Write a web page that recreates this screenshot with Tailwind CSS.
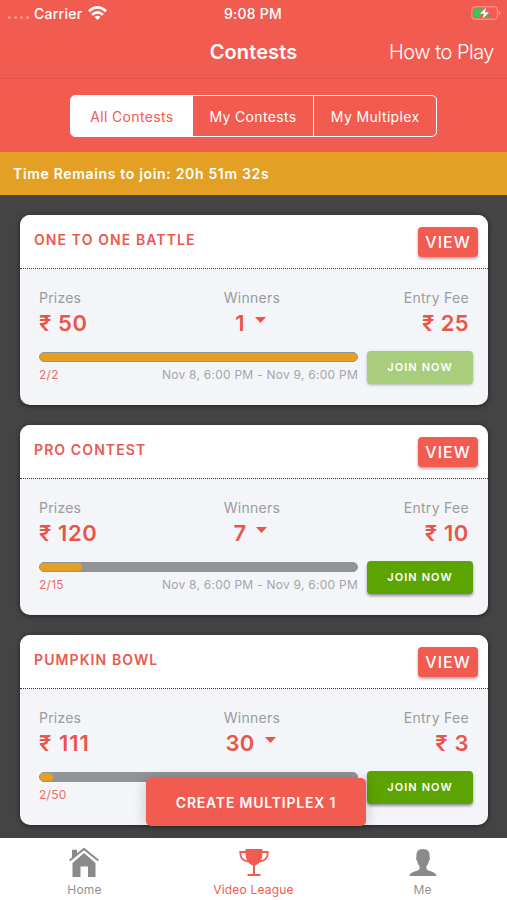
<!DOCTYPE html>
<html lang="en">
<head>
<meta charset="utf-8">
<title>Contests</title>
<script src="https://cdn.jsdelivr.net/npm/@tailwindcss/browser@4"></script>
</head>
<body class="bg-[#444]">
<div class="relative flex h-[900px] w-[507px] flex-col overflow-hidden bg-[#444] font-['Inter','Liberation_Sans',sans-serif] whitespace-nowrap">
  <header class="h-[152px] shrink-0 bg-[#f25b50] text-white">
    <div class="grid h-[26px] grid-cols-3 items-center pr-[6px] pl-2">
      <div class="flex items-center">
        <div class="mt-2 flex w-[26px] gap-[3px]"><i class="size-[3px] rounded-full bg-white/35"></i><i class="size-[3px] rounded-full bg-white/35"></i><i class="size-[3px] rounded-full bg-white/35"></i><i class="size-[3px] rounded-full bg-white/35"></i></div>
        <span class="text-[14px] font-medium tracking-[0.25px]">Carrier</span>
        <svg class="ml-[6px] h-[14px] w-[19px]" viewBox="0 0 19 14" fill="none" stroke="#fff" stroke-width="2.6"><path d="M1 5.2Q9.500-2.400 18 5.200"/><path d="M4 8.700Q9.500 3.900 15 8.700"/><path d="M9.500 14L6.500 11Q9.500 8.300 12.500 11Z" fill="#fff" stroke="none"/></svg>
      </div>
      <div class="-ml-[3px] text-center text-[14px] font-medium tracking-[0.25px]">9:08 PM</div>
      <svg class="h-[14px] w-[30px] justify-self-end" viewBox="0 0 30 14"><rect x=".8" y=".8" width="25.500" height="12.400" rx="3" fill="none" stroke="#fff" stroke-opacity=".45"/><path d="M28 5v4q1.500-.6 1.500-2T28 5" fill="#fff" fill-opacity=".45"/><path d="M4 2.500h8L8.500 11.500H4Q2.500 11.500 2.500 10V4Q2.500 2.500 4 2.500M15 7h2.500v4.500h-4z" fill="#35c759"/><path d="M15.200 1.500L9 7.800h4l-1.500 5L18 6.200h-4z" fill="#fff"/></svg>
    </div>
    <div class="grid h-[53px] grid-cols-3 items-center border-b border-[#e4544a] pr-[13px] pl-[13px]">
      <div></div>
      <h1 class="text-center text-[20px] font-semibold tracking-[0.1px]">Contests</h1>
      <div class="justify-self-end text-[20px] font-light tracking-[-0.5px]">How to Play</div>
    </div>
    <div class="mx-auto mt-4 grid h-[42px] w-[367px] grid-cols-3 overflow-hidden rounded-[5px] border border-white text-center text-[14px] leading-[41px] tracking-[0.35px]">
      <div class="bg-white text-[#f25b50]">All Contests</div>
      <div class="border-r border-white">My Contests</div>
      <div>My Multiplex</div>
    </div>
  </header>
  <div class="flex h-[43px] shrink-0 items-center bg-[#e3a024] pl-[13px] text-[14px] font-semibold tracking-[0.67px] text-white">Time Remains to join: 20h 51m 32s</div>

  <main class="flex flex-col gap-5 pt-5 pr-[19px] pl-5">
    <section class="h-[190px] shrink-0 overflow-hidden rounded-[10px] bg-[#f3f5f9] shadow-[0_1px_5px_#222]">
      <div class="flex h-[54px] items-start justify-between border-b border-dotted border-[#333] bg-white pt-3 pr-[10px] pl-[14px]">
        <h2 class="mt-[3px] text-[14px] leading-5 font-semibold tracking-[1.1px] text-[#e9594f]">ONE TO ONE BATTLE</h2>
        <div class="h-[30px] w-[60px] rounded-[4px] bg-[#f25b50] text-center text-[16px] leading-[30px] font-medium tracking-[1px] text-white shadow-[0_2px_3px_#0005]">VIEW</div>
      </div>
      <div class="grid grid-cols-3 pt-[19px] pr-[19px] pl-[19px] text-[14px] leading-5 text-[#999ca1]">
        <div class="tracking-[0.2px]">Prizes<div class="-mt-px mb-[3px] text-[22px] leading-8 font-semibold tracking-[0.6px] text-[#ea5549]">₹ 50</div></div>
        <div class="-ml-1 justify-self-center text-center tracking-[0.3px]">Winners<div class="-mt-px mb-[3px] -ml-[3px] flex justify-center gap-[10px] text-[22px] leading-8 font-semibold text-[#ea5549]">1<svg class="mt-[10px] h-[6px] w-[11px]" viewBox="0 0 11 6"><path d="M0 0h11L5.500 6z" fill="currentColor"/></svg></div></div>
        <div class="text-right tracking-[0.3px]">Entry Fee<div class="-mt-px mb-[3px] text-[22px] leading-8 font-semibold tracking-[0.4px] text-[#ea5549]">₹ 25</div></div>
      </div>
      <div class="flex justify-between pr-[15px] pl-[19px]">
        <div class="mt-[10px] w-[319px]">
          <div class="h-[10px] rounded-full border border-[#919395] bg-[#919395]"><div class="h-full rounded-full bg-[#e3a024]" style="width:100%"></div></div>
          <div class="mt-1 flex justify-between text-[12px] leading-[18px] tracking-[0.25px] text-[#a3a6aa]"><span class="text-[#f06c63]">2/2</span><span>Nov 8, 6:00 PM - Nov 9, 6:00 PM</span></div>
        </div>
        <div class="mt-[9px] h-[33px] w-[106px] rounded-[4px] bg-[#a7cd7d] text-center text-[11px] leading-8 font-semibold tracking-[1.1px] text-white shadow-[0_1px_3px_#0004]">JOIN NOW</div>
      </div>
    </section>
    <section class="h-[190px] shrink-0 overflow-hidden rounded-[10px] bg-[#f3f5f9] shadow-[0_1px_5px_#222]">
      <div class="flex h-[54px] items-start justify-between border-b border-dotted border-[#333] bg-white pt-3 pr-[10px] pl-[14px]">
        <h2 class="mt-[3px] text-[14px] leading-5 font-semibold tracking-[1.1px] text-[#e9594f]">PRO CONTEST</h2>
        <div class="h-[30px] w-[60px] rounded-[4px] bg-[#f25b50] text-center text-[16px] leading-[30px] font-medium tracking-[1px] text-white shadow-[0_2px_3px_#0005]">VIEW</div>
      </div>
      <div class="grid grid-cols-3 pt-[19px] pr-[19px] pl-[19px] text-[14px] leading-5 text-[#999ca1]">
        <div class="tracking-[0.2px]">Prizes<div class="-mt-px mb-[3px] text-[22px] leading-8 font-semibold tracking-[0.6px] text-[#ea5549]">₹ 120</div></div>
        <div class="-ml-1 justify-self-center text-center tracking-[0.3px]">Winners<div class="-mt-px mb-[3px] -ml-[3px] flex justify-center gap-[10px] text-[22px] leading-8 font-semibold text-[#ea5549]">7<svg class="mt-[10px] h-[6px] w-[11px]" viewBox="0 0 11 6"><path d="M0 0h11L5.500 6z" fill="currentColor"/></svg></div></div>
        <div class="text-right tracking-[0.3px]">Entry Fee<div class="-mt-px mb-[3px] text-[22px] leading-8 font-semibold tracking-[0.6px] text-[#ea5549]">₹ 10</div></div>
      </div>
      <div class="flex justify-between pr-[15px] pl-[19px]">
        <div class="mt-[10px] w-[319px]">
          <div class="h-[10px] rounded-full border border-[#919395] bg-[#919395]"><div class="h-full rounded-full bg-[#e3a024]" style="width:13.33%"></div></div>
          <div class="mt-1 flex justify-between text-[12px] leading-[18px] tracking-[0.25px] text-[#a3a6aa]"><span class="text-[#f06c63]">2/15</span><span>Nov 8, 6:00 PM - Nov 9, 6:00 PM</span></div>
        </div>
        <div class="mt-[9px] h-[33px] w-[106px] rounded-[4px] bg-[#5ca402] text-center text-[11px] leading-8 font-semibold tracking-[1.1px] text-white shadow-[0_2px_3px_#0006]">JOIN NOW</div>
      </div>
    </section>
    <section class="h-[190px] shrink-0 overflow-hidden rounded-[10px] bg-[#f3f5f9] shadow-[0_1px_5px_#222]">
      <div class="flex h-[54px] items-start justify-between border-b border-dotted border-[#333] bg-white pt-3 pr-[10px] pl-[14px]">
        <h2 class="mt-[3px] text-[14px] leading-5 font-semibold tracking-[1.1px] text-[#e9594f]">PUMPKIN BOWL</h2>
        <div class="h-[30px] w-[60px] rounded-[4px] bg-[#f25b50] text-center text-[16px] leading-[30px] font-medium tracking-[1px] text-white shadow-[0_2px_3px_#0005]">VIEW</div>
      </div>
      <div class="grid grid-cols-3 pt-[19px] pr-[19px] pl-[19px] text-[14px] leading-5 text-[#999ca1]">
        <div class="tracking-[0.2px]">Prizes<div class="-mt-px mb-[3px] text-[22px] leading-8 font-semibold tracking-[1px] text-[#ea5549]">₹ 111</div></div>
        <div class="-ml-1 justify-self-center text-center tracking-[0.3px]">Winners<div class="-mt-px mb-[3px] -ml-[3px] flex justify-center gap-[10px] text-[22px] leading-8 font-semibold text-[#ea5549]">30<svg class="mt-[10px] h-[6px] w-[11px]" viewBox="0 0 11 6"><path d="M0 0h11L5.500 6z" fill="currentColor"/></svg></div></div>
        <div class="text-right tracking-[0.3px]">Entry Fee<div class="-mt-px mb-[3px] text-[22px] leading-8 font-semibold tracking-[0.6px] text-[#ea5549]">₹ 3</div></div>
      </div>
      <div class="flex justify-between pr-[15px] pl-[19px]">
        <div class="mt-[10px] w-[319px]">
          <div class="h-[10px] rounded-full border border-[#919395] bg-[#919395]"><div class="h-full rounded-full bg-[#e3a024]" style="width:4%"></div></div>
          <div class="mt-1 text-[12px] leading-[18px] tracking-[0.25px] text-[#f06c63]">2/50</div>
        </div>
        <div class="mt-[9px] h-[33px] w-[106px] rounded-[4px] bg-[#5ca402] text-center text-[11px] leading-8 font-semibold tracking-[1.1px] text-white shadow-[0_2px_3px_#0006]">JOIN NOW</div>
      </div>
    </section>
  </main>

  <div class="absolute top-[778px] left-[146px] h-[48px] w-[220px] rounded-[5px] bg-[#f25b50] text-center text-[14px] leading-[49px] font-semibold tracking-[0.8px] text-white shadow-[0_2px_14px_#0003]">CREATE MULTIPLEX 1</div>

  <nav class="mt-auto grid h-[62px] shrink-0 grid-cols-3 justify-items-center bg-white pt-[10px] text-[12px] leading-4 tracking-[0.2px] text-[#929292]">
    <div class="flex flex-col items-center gap-1">
      <svg class="h-[30px] w-[30px]" viewBox="0 0 30 30" fill="#8a8a8a"><path d="M3 2h5v4.500L3 11zM15 5l11.500 10v14h-7.500V18.500h-7.500V29H3.500V15z"/><path d="M.7 12.800L15 1.200 29.300 12.800" fill="none" stroke="#fff" stroke-width="5"/><path d="M3 1.800h5v4.500L3 10z"/><path d="M.7 12.500L15 .9 29.300 12.500" fill="none" stroke="#8a8a8a" stroke-width="2"/></svg>
      Home
    </div>
    <div class="flex flex-col items-center gap-1 text-[#f25b50]">
      <svg class="h-[30px] w-[30px]" viewBox="0 0 30 30" fill="#f25b50"><path d="M6.500 1h17v3c0 8-3 12-7.500 13.500v8.500h5.500v2h-13v-2h5.500v-8.500C9.500 16 6.500 12 6.500 4z"/><path d="M7 4H1.200C1.200 9 3 13 9 13.500M23 4h5.800C28.800 9 27 13 21 13.500" fill="none" stroke="#f25b50" stroke-width="1.800"/></svg>
      Video League
    </div>
    <div class="flex flex-col items-center gap-1">
      <svg class="h-[30px] w-[30px]" viewBox="0 0 30 30" fill="#8a8a8a"><path d="M15 1c-5 0-7 3-6.500 7.500-.9 1-.3 3.500.7 4.500.3 2.500 1.300 4 2.300 5v3c-1 2.500-9.500 2-10 7h27c-.5-5-9-4.500-10-7v-3c1-1 2-2.500 2.300-5 1-1 1.600-3.500.7-4.500.5-4.500-1.500-7.500-6.500-7.500z"/></svg>
      Me
    </div>
  </nav>
</div>
</body>
</html>
